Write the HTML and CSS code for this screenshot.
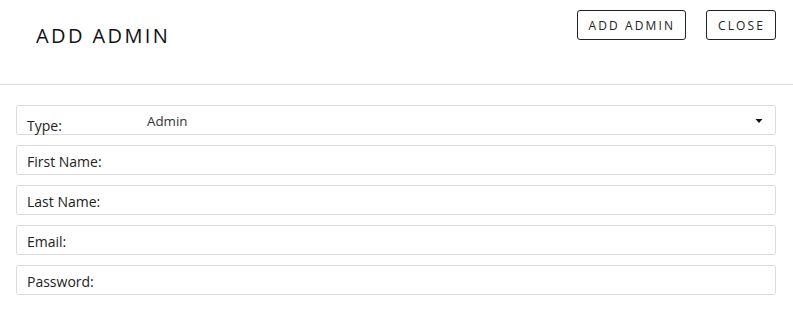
FILE: index.html
```html
<!DOCTYPE html>
<html>
<head>
<meta charset="utf-8">
<link rel="stylesheet" href="styles.css">
</head>
<body>
<div class="modal">
  <header class="header">
    <h1 class="title">ADD ADMIN</h1>
    <div class="actions">
      <button class="btn">ADD ADMIN</button>
      <button class="btn">CLOSE</button>
    </div>
  </header>
  <form class="form">
    <div class="field field-type">
      <span class="label label-type">Type:</span>
      <div class="select">
        <span class="select-value">Admin</span>
        <svg class="caret" width="8" height="4" viewBox="0 0 8 4"><path d="M0.5 0 L7.5 0 L4 4 Z" fill="#111"/></svg>
      </div>
    </div>
    <div class="field"><span class="label">First Name:</span></div>
    <div class="field"><span class="label">Last Name:</span></div>
    <div class="field"><span class="label">Email:</span></div>
    <div class="field"><span class="label">Password:</span></div>
  </form>
</div>
</body>
</html>
```
FILE: styles.css
```css
* { box-sizing: border-box; }
html, body { margin: 0; padding: 0; background: #fff; }
body {
  font-family: "Open Sans", "Liberation Sans", sans-serif;
  color: #222;
}
.header {
  display: flex;
  justify-content: space-between;
  align-items: flex-start;
  height: 85px;
  border-bottom: 1px solid #dedede;
  padding: 10px 17px 0 36px;
}
.title {
  margin: 12px 0 0;
  font-size: 20px;
  font-weight: 400;
  line-height: 27px;
  letter-spacing: 2.4px;
  color: #111;
}
.actions {
  display: flex;
  gap: 20px;
}
.btn {
  height: 30px;
  padding: 0 10px 0 11px;
  border: 1px solid #222;
  border-radius: 3px;
  background: #fff;
  font-family: "Open Sans", "Liberation Sans", sans-serif;
  font-size: 12px;
  letter-spacing: 2.1px;
  color: #222;
  display: flex;
  align-items: center;
}
.form {
  display: flex;
  flex-direction: column;
  gap: 10px;
  padding: 20px 17px 0 16px;
}
.field {
  height: 30px;
  border: 1px solid #dcdcdc;
  border-radius: 3px;
  padding: 6px 10px 0;
  font-size: 14px;
  line-height: 19px;
}
.field-type {
  display: flex;
  align-items: flex-start;
  padding: 0 0 0 10px;
}
.label-type {
  width: 120px;
  padding-top: 10px;
}
.select {
  flex: 1;
  display: flex;
  align-items: flex-start;
  height: 28px;
  padding-top: 6px;
}
.select-value {
  font-size: 13.33px;
  line-height: 18px;
  color: #333;
}
.caret {
  margin-left: auto;
  margin-right: 12px;
  margin-top: 7px;
}
```
